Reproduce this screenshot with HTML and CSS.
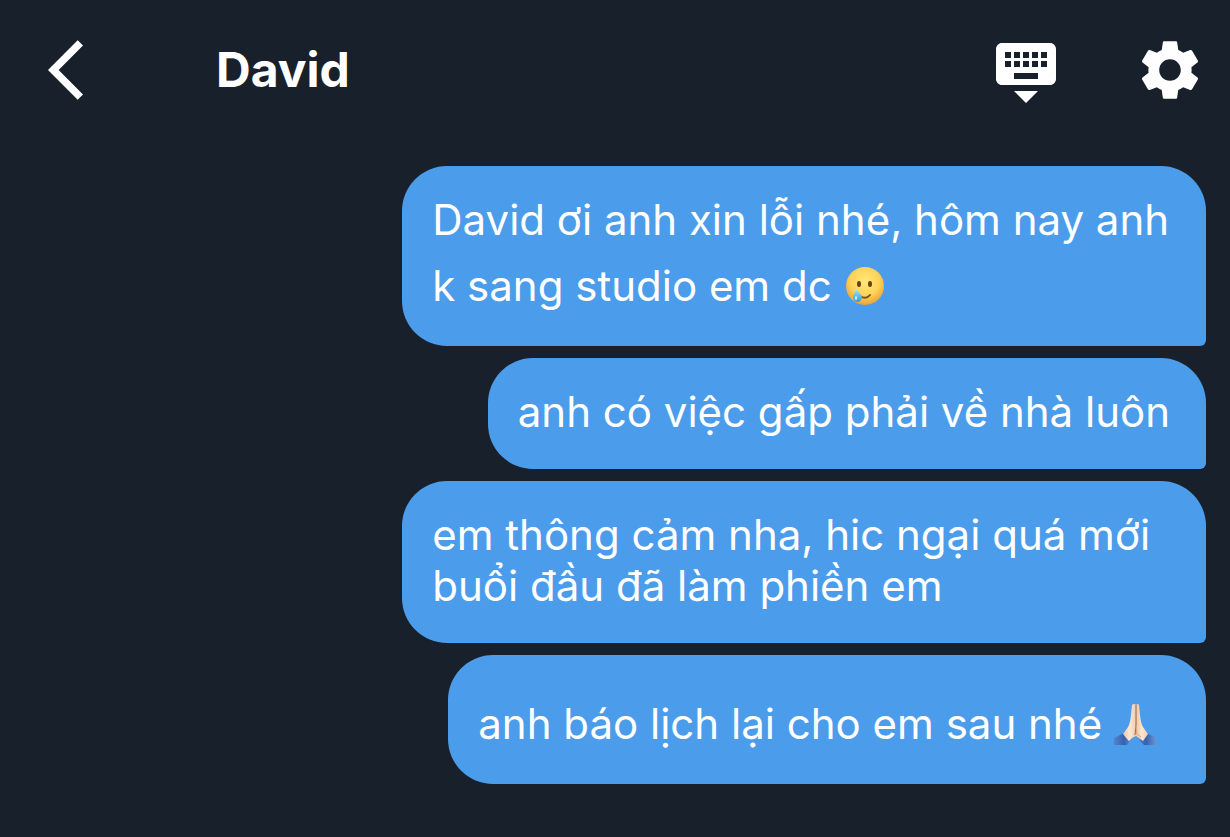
FILE: index.html
```html
<!DOCTYPE html>
<html lang="vi">

<head>
  <meta charset="UTF-8">
  <meta name="viewport" content="width=device-width, initial-scale=1.0">
  <title>David</title>
  <link rel="stylesheet" href="styles.css">
</head>

<body>
  <header class="topbar">
    <button class="icon-btn" type="button" aria-label="Back">
      <svg viewBox="0 0 24 24"><path d="M11.67 3.87L9.9 2.1 0 12l9.9 9.9 1.77-1.77L3.54 12z"/></svg>
    </button>
    <h1 class="topbar-title">David</h1>
    <div class="topbar-actions">
      <button class="icon-btn" type="button" aria-label="Hide keyboard">
        <svg viewBox="0 0 24 24"><path d="M20 3H4c-1.1 0-1.99.9-1.99 2L2 15c0 1.1.9 2 2 2h16c1.1 0 2-.9 2-2V5c0-1.1-.9-2-2-2zm-9 3h2v2h-2V6zm0 3h2v2h-2V9zM8 6h2v2H8V6zm0 3h2v2H8V9zm-1 2H5V9h2v2zm0-3H5V6h2v2zm9 7H8v-2h8v2zm0-4h-2V9h2v2zm0-3h-2V6h2v2zm3 3h-2V9h2v2zm0-3h-2V6h2v2zm-7 15l4-4H8l4 4z"/></svg>
      </button>
      <button class="icon-btn" type="button" aria-label="Settings">
        <svg viewBox="0 0 24 24"><path d="M19.14 12.94c.04-.3.06-.61.06-.94 0-.32-.02-.64-.07-.94l2.03-1.58c.18-.14.23-.41.12-.61l-1.92-3.32c-.12-.22-.37-.29-.59-.22l-2.39.96c-.5-.38-1.03-.7-1.62-.94l-.36-2.54c-.04-.24-.24-.41-.48-.41h-3.84c-.24 0-.43.17-.47.41l-.36 2.54c-.59.24-1.13.57-1.62.94l-2.39-.96c-.22-.08-.47 0-.59.22L2.74 8.87c-.12.21-.08.47.12.61l2.03 1.58c-.05.3-.09.63-.09.94s.02.64.07.94l-2.03 1.58c-.18.14-.23.41-.12.61l1.92 3.32c.12.22.37.29.59.22l2.39-.96c.5.38 1.03.7 1.62.94l.36 2.54c.05.24.24.41.48.41h3.84c.24 0 .44-.17.47-.41l.36-2.54c.59-.24 1.13-.56 1.62-.94l2.39.96c.22.08.47 0 .59-.22l1.92-3.32c.12-.22.07-.47-.12-.61l-2.01-1.58zM12 15.6c-1.98 0-3.6-1.62-3.6-3.6s1.62-3.6 3.6-3.6 3.6 1.62 3.6 3.6-1.62 3.6-3.6 3.6z"/></svg>
      </button>
    </div>
  </header>

  <main class="messages">
    <p class="bubble">David ơi anh xin lỗi nhé, hôm nay anh k sang studio em dc
      <svg class="emoji" viewBox="0 -2 56 69" role="img" aria-label="Smiling face with tear">
        <defs>
          <radialGradient id="face" cx="50%" cy="38%" r="62%">
            <stop offset="0" stop-color="#ffe779"/>
            <stop offset=".6" stop-color="#fdd458"/>
            <stop offset="1" stop-color="#e9a23b"/>
          </radialGradient>
          <linearGradient id="tear" x1="0" y1="0" x2="0" y2="1">
            <stop offset="0" stop-color="#c4e6ee"/>
            <stop offset=".5" stop-color="#6dc0ee"/>
            <stop offset="1" stop-color="#3d94dc"/>
          </linearGradient>
        </defs>
        <circle cx="21" cy="39" r="19" fill="url(#face)"/>
        <ellipse cx="15" cy="37" rx="2" ry="3" fill="#65401a"/>
        <ellipse cx="26" cy="37" rx="2" ry="3" fill="#65401a"/>
        <path d="M16 49q6 4 10-1" fill="none" stroke="#804d1b" stroke-width="2" stroke-linecap="round"/>
        <path d="M12 41c1 3 6 6 6 9.500a4.500 4.500 0 0 1-9 0c0-3.500 3-5.500 3-9.500z" fill="url(#tear)"/>
        <ellipse cx="12" cy="51" rx="1.200" ry="2" fill="#c9ebfb"/>
      </svg></p>
    <p class="bubble">anh có việc gấp phải về nhà luôn</p>
    <p class="bubble">em thông cảm nha, hic ngại quá mới buổi đầu đã làm phiền em</p>
    <p class="bubble">anh báo lịch lại cho em sau nhé
      <svg class="emoji" viewBox="0 -2 56 69" role="img" aria-label="Folded hands">
        <defs>
          <linearGradient id="skin" x1="0" y1="0" x2="1" y2="0">
            <stop offset="0" stop-color="#eec6a2"/>
            <stop offset=".5" stop-color="#fde6ce"/>
            <stop offset="1" stop-color="#f0cdb0"/>
          </linearGradient>
          <linearGradient id="cuff-left" x1="0" y1="0" x2="1" y2="0">
            <stop offset="0" stop-color="#5585cc"/>
            <stop offset=".6" stop-color="#3560ad"/>
            <stop offset="1" stop-color="#5c8fd6"/>
          </linearGradient>
          <linearGradient id="cuff-right" x1="1" y1="0" x2="0" y2="0">
            <stop offset="0" stop-color="#6d93cf"/>
            <stop offset=".6" stop-color="#3560ad"/>
            <stop offset="1" stop-color="#527fc2"/>
          </linearGradient>
        </defs>
        <path d="M0 53l10-5 7 7-4 5H0z" fill="url(#cuff-left)"/>
        <path d="M42 53l-9-5-8 7 5 5h12z" fill="url(#cuff-right)"/>
        <path d="M18 20q2-2 4 0v31l-4 2-3 3q-3-3-6-7l5-7q2-3 3-12z" fill="url(#skin)"/>
        <path d="M22 20q2-2 3 0l1 10q1 9 3 12l5 7-5 7-4-3-3-2z" fill="url(#skin)"/>
        <path d="M22 20v20l-1 10" fill="none" stroke="#9d644c" stroke-width="1"/>
        <path d="M22 42l1 7 4 3" fill="none" stroke="#d9a583" stroke-width="1"/>
      </svg></p>
  </main>
</body>

</html>
```
FILE: styles.css
```css
:root {
  --page-bg: #18202b;
  --bubble-bg: #4b9cea;
  --text: #fff;
}

* {
  box-sizing: border-box;
}

body {
  margin: 0;
  background-color: var(--page-bg);
  color: var(--text);
  font-family: Inter, "Noto Sans", sans-serif;
}

.topbar {
  display: flex;
  align-items: center;
  padding: 34px 24px 34px 48px;
}

.topbar-title {
  flex: 1;
  margin: 0 0 0 96px;
  font-size: 48px;
  font-weight: 700;
  line-height: 72px;
}

.topbar-actions {
  display: flex;
  gap: 72px;
}

.icon-btn {
  width: 72px;
  height: 72px;
  padding: 0;
  border: none;
  background: none;
  color: inherit;
  cursor: pointer;
}

.icon-btn svg {
  display: block;
  width: 100%;
  height: 100%;
  fill: currentColor;
}

.messages {
  display: flex;
  flex-direction: column;
  align-items: flex-end;
  gap: 12px;
  padding: 26px 24px;
}

.bubble {
  max-width: 68%;
  margin: 0;
  padding: 28px 36px 32px 30px;
  border-radius: 45px 45px 6px 45px;
  background-color: var(--bubble-bg);
  font-size: 42px;
  line-height: 51px;
}

/* taller than the text, so its line grows with it */
.emoji {
  width: 56px;
  height: 69px;
  vertical-align: -13px;
}
```
